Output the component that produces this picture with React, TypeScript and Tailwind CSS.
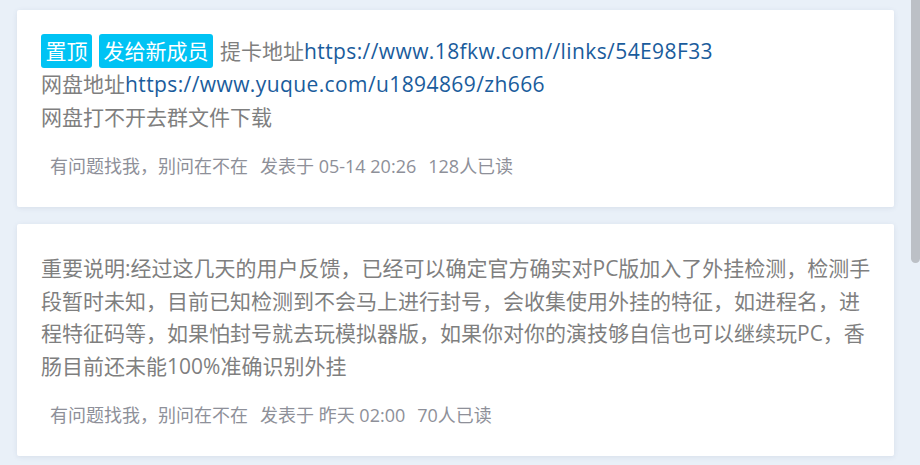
import React from "react"

interface Post {
  body: React.ReactNode
  time: string
  reads: number
}

const font = { fontFamily: '"Open Sans", "Noto Sans CJK SC", sans-serif' }

function Badge({ children }: { children: React.ReactNode }) {
  return (
    <span className="inline-block bg-[#00c3f4] text-white rounded-[3px] px-[4.5px] leading-[34px] mr-[7px] align-baseline">
      {children}
    </span>
  )
}

function Link({ href }: { href: string }) {
  return <a className="text-[#1a5c9c] tracking-[0.4px]">{href}</a>
}

const posts: Post[] = [
  {
    body: (
      <>
        <Badge>置顶</Badge>
        <Badge>发给新成员</Badge>
        提卡地址<Link href="https://www.18fkw.com//links/54E98F33" />
        <br />
        网盘地址<Link href="https://www.yuque.com/u1894869/zh666" />
        <br />
        网盘打不开去群文件下载
      </>
    ),
    time: "05-14 20:26",
    reads: 128,
  },
  {
    body: (
      <>
        重要说明:经过这几天的用户反馈，已经可以确定官方确实对PC版加入了外挂检测，检测手段暂时未知，目前已知检测到不会马上进行封号，会收集使用外挂的特征，如进程名，进程特征码等，如果怕封号就去玩模拟器版，如果你对你的演技够自信也可以继续玩PC，香肠目前还未能100%准确识别外挂
      </>
    ),
    time: "昨天 02:00",
    reads: 70,
  },
]

function PostCard({ post, first }: { post: Post; first: boolean }) {
  return (
    <section
      className={`bg-white rounded-[2px] shadow-[0_1px_5px_rgba(80,100,130,0.12)] pl-6 pr-[18px] pb-[26px] ${first ? "pt-[24px]" : "pt-[28px]"}`}
    >
      <div className="text-[21px] leading-[32.5px] text-[#7f7f7f]">{post.body}</div>
      <div className="mt-[18px] pl-[9px] text-[18px] leading-[30px] text-[#8e9099] flex gap-[12px]">
        <span>有问题找我，别问在不在</span>
        <span>发表于 {post.time}</span>
        <span>{post.reads}人已读</span>
      </div>
    </section>
  )
}

export default function App() {
  return (
    <div className="w-[920px] h-[465px] overflow-hidden bg-[#e9f0f8] flex" style={font}>
      <main className="flex-1 pl-[17px] pr-[17px] pt-[10px] flex flex-col gap-[17px]">
        {posts.map((p, i) => (
          <PostCard key={i} post={p} first={i === 0} />
        ))}
      </main>
      <div className="w-[9px] h-[263px] bg-[#bcc0c6] rounded-b-[5px]" />
    </div>
  )
}
